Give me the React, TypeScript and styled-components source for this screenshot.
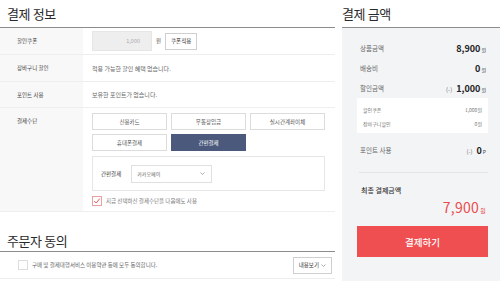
import React from "react";
import styled, { createGlobalStyle } from "styled-components";

const Global = createGlobalStyle`
  html, body { margin: 0; padding: 0; background: #fff; }
  body { font-family: "Noto Sans CJK KR", "Noto Sans", sans-serif; color: #333; width: 500px; height: 281px; overflow: hidden; }
  * { box-sizing: border-box; }
`;

const Page = styled.div`
  display: flex;
  width: 500px;
  height: 281px;
  gap: 7px;
`;

const LeftCol = styled.div`
  width: 336px;
  display: flex;
  flex-direction: column;
`;

const RightCol = styled.div`
  flex: 1;
  display: flex;
  flex-direction: column;
`;

const Title = styled.h2<{ $pad?: number; $top?: number; $h?: number }>`
  margin: 0;
  padding: ${(p) => p.$top ?? 5}px 0 0 ${(p) => p.$pad ?? 0}px;
  height: ${(p) => p.$h ?? 28}px;
  font-size: 13px;
  font-weight: 400;
  letter-spacing: -0.4px;
  color: #2a2a2a;
  line-height: 17px;
  border-bottom: 1px solid #8c8c8c;
  flex: none;
`;

const Row = styled.div<{ $h?: number }>`
  display: flex;
  min-height: ${(p) => p.$h ?? 27}px;
  border-bottom: 1px solid #eeeeee;
`;

const Label = styled.div`
  width: 83px;
  flex: none;
  background: #f8f8f8;
  padding: 10px 0 0 17px;
  font-size: 5.5px;
  line-height: 6px;
  color: #444;
`;

const Cell = styled.div<{ $center?: boolean }>`
  flex: 1;
  padding: 0 10px 0 9px;
  display: flex;
  flex-direction: column;
  justify-content: ${(p) => (p.$center ? "center" : "flex-start")};
  font-size: 6px;
  color: #666;
`;

const InlineRow = styled.div`
  display: flex;
  align-items: center;
`;

const CouponInput = styled.div`
  width: 60px;
  height: 20px;
  background: #eeeeee;
  border: 1px solid #e6e6e6;
  display: flex;
  align-items: center;
  justify-content: flex-end;
  padding-right: 11px;
  color: #aaa;
  font-size: 5.5px;
`;

const Won = styled.span`
  margin: 0 4px 0 4px;
  color: #555;
  font-size: 5.5px;
`;

const SmallBtn = styled.button`
  height: 17px;
  padding: 0 5px;
  border: 1px solid #cfcfcf;
  background: #fff;
  font-family: inherit;
  font-size: 5.5px;
  color: #333;
  display: flex;
  align-items: center;
  gap: 2px;
  cursor: pointer;
`;

const PayGrid = styled.div`
  display: grid;
  grid-template-columns: repeat(3, 75px);
  gap: 4px;
  margin-top: 5px;
`;

const PayBtn = styled.button<{ $active?: boolean }>`
  height: 17px;
  border: 1px solid ${(p) => (p.$active ? "#4b5a7c" : "#dcdcdc")};
  background: ${(p) => (p.$active ? "#4b5a7c" : "#fff")};
  color: ${(p) => (p.$active ? "#fff" : "#555")};
  font-family: inherit;
  font-size: 5.5px;
  padding: 0;
`;

const EasyBox = styled.div`
  margin-top: 5px;
  width: 233px;
  height: 35px;
  border: 1px solid #e6e6e6;
  display: flex;
  align-items: center;
  padding-left: 8px;
  gap: 10px;
  color: #444;
  font-size: 5.5px;
`;

const Select = styled.div`
  width: 81px;
  height: 18px;
  border: 1px solid #e0e0e0;
  display: flex;
  align-items: center;
  justify-content: space-between;
  padding: 0 6px 0 5px;
  color: #666;
  font-size: 5px;
`;

const CheckLine = styled.label`
  display: flex;
  align-items: center;
  gap: 4px;
  margin-top: 5px;
  color: #777;
  font-size: 5.5px;
`;

const Box = styled.span<{ $checked?: boolean }>`
  width: 10px;
  height: 10px;
  border: 1px solid ${(p) => (p.$checked ? "#e8a0a0" : "#dddddd")};
  background: #fff;
  display: flex;
  align-items: center;
  justify-content: center;
  flex: none;
`;

const AgreeRow = styled.div`
  height: 27px;
  display: flex;
  align-items: center;
  justify-content: space-between;
  padding: 0 3px 0 18px;
  border-bottom: 1px solid #eeeeee;
  font-size: 5.5px;
  color: #666;
`;

const AgreeText = styled.div`
  display: flex;
  align-items: center;
  gap: 4px;
`;

const Panel = styled.div`
  flex: 1;
  background: #f3f4f6;
  padding: 10px 12px 0 15px;
  display: flex;
  flex-direction: column;
`;

const SumRow = styled.div<{ $h?: number }>`
  height: ${(p) => p.$h ?? 20}px;
  flex: none;
  display: flex;
  align-items: center;
  justify-content: space-between;
  padding: 0 2px 0 3px;
  font-size: 6.5px;
  color: #666;
`;

const Amount = styled.span`
  display: flex;
  align-items: baseline;
  gap: 1px;
  color: #222;
  font-weight: 700;
  font-size: 9px;
`;

const Minus = styled.span`
  font-weight: 400;
  font-size: 6px;
  color: #777;
  margin-right: 3px;
`;

const Unit = styled.span`
  font-weight: 400;
  font-size: 5px;
  color: #444;
`;

const SubBox = styled.div`
  background: #fff;
  height: 35px;
  flex: none;
  padding: 4px 6px 3px 6px;
  display: flex;
  flex-direction: column;
`;

const SubRow = styled.div`
  height: 14px;
  display: flex;
  align-items: center;
  justify-content: space-between;
  font-size: 5px;
  color: #777;
`;

const Divider = styled.div`
  height: 1px;
  flex: none;
  background: #e2e3e6;
  margin: 5px 0 0 2px;
`;

const FinalLabel = styled.div`
  margin-top: 12px;
  padding-left: 4px;
  height: 10px;
  line-height: 10px;
  font-size: 7px;
  font-weight: 500;
  color: #333;
`;

const FinalAmount = styled.div`
  text-align: right;
  padding-right: 2px;
  margin-top: 3px;
  height: 18px;
  color: #ea4b4e;
  font-size: 14px;
  line-height: 18px;
  letter-spacing: 0.3px;
`;

const FinalUnit = styled.span`
  font-size: 6px;
  margin-left: 1px;
`;

const PayButton = styled.button`
  margin-top: 10px;
  height: 31px;
  width: 131px;
  flex: none;
  border: none;
  background: #f04f52;
  color: #fff;
  font-family: inherit;
  font-size: 9.5px;
  font-weight: 500;
`;

const Chevron = () => (
  <svg width="5" height="3" viewBox="0 0 10 6">
    <polyline points="1,1 5,5 9,1" fill="none" stroke="#888" strokeWidth="1.4" />
  </svg>
);

const Check = () => (
  <svg width="8" height="8" viewBox="0 0 10 10">
    <polyline points="1.5,5 4,7.5 8.5,2" fill="none" stroke="#e05050" strokeWidth="1.2" />
  </svg>
);

export default function App() {
  return (
    <>
      <Global />
      <Page>
        <LeftCol>
          <Title $pad={7}>결제 정보</Title>
          <Row>
            <Label>할인쿠폰</Label>
            <Cell $center>
              <InlineRow>
                <CouponInput>1,000</CouponInput>
                <Won>원</Won>
                <SmallBtn>쿠폰적용</SmallBtn>
              </InlineRow>
            </Cell>
          </Row>
          <Row>
            <Label>장바구니 할인</Label>
            <Cell $center>적용 가능한 할인 혜택 없습니다.</Cell>
          </Row>
          <Row $h={26}>
            <Label>포인트 사용</Label>
            <Cell $center>보유한 포인트가 없습니다.</Cell>
          </Row>
          <Row $h={104}>
            <Label>결제수단</Label>
            <Cell>
              <PayGrid>
                <PayBtn>신용카드</PayBtn>
                <PayBtn>무통장입금</PayBtn>
                <PayBtn>실시간계좌이체</PayBtn>
                <PayBtn>휴대폰결제</PayBtn>
                <PayBtn $active>간편결제</PayBtn>
              </PayGrid>
              <EasyBox>
                <span>간편결제</span>
                <Select>
                  <span>카카오페이</span>
                  <Chevron />
                </Select>
              </EasyBox>
              <CheckLine>
                <Box $checked>
                  <Check />
                </Box>
                지금 선택하신 결제수단을 다음에도 사용
              </CheckLine>
            </Cell>
          </Row>
          <Title $pad={7} $top={20} $h={40}>
            주문자 동의
          </Title>
          <AgreeRow>
            <AgreeText>
              <Box />
              구매 및 결제대행서비스 이용약관 등에 모두 동의합니다.
            </AgreeText>
            <SmallBtn>
              내용보기 <Chevron />
            </SmallBtn>
          </AgreeRow>
        </LeftCol>
        <RightCol>
          <Title>결제 금액</Title>
          <Panel>
            <SumRow>
              <span>상품금액</span>
              <Amount>
                8,900<Unit>원</Unit>
              </Amount>
            </SumRow>
            <SumRow>
              <span>배송비</span>
              <Amount>
                0<Unit>원</Unit>
              </Amount>
            </SumRow>
            <SumRow>
              <span>할인금액</span>
              <Amount>
                <Minus>(-)</Minus>1,000<Unit>원</Unit>
              </Amount>
            </SumRow>
            <SubBox>
              <SubRow>
                <span>할인쿠폰</span>
                <span>1,000원</span>
              </SubRow>
              <SubRow>
                <span>장바구니할인</span>
                <span>0원</span>
              </SubRow>
            </SubBox>
            <SumRow $h={34}>
              <span>포인트 사용</span>
              <Amount>
                <Minus>(-)</Minus>0<Unit>P</Unit>
              </Amount>
            </SumRow>
            <Divider />
            <FinalLabel>최종 결제금액</FinalLabel>
            <FinalAmount>
              7,900<FinalUnit>원</FinalUnit>
            </FinalAmount>
            <PayButton>결제하기</PayButton>
          </Panel>
        </RightCol>
      </Page>
    </>
  );
}
